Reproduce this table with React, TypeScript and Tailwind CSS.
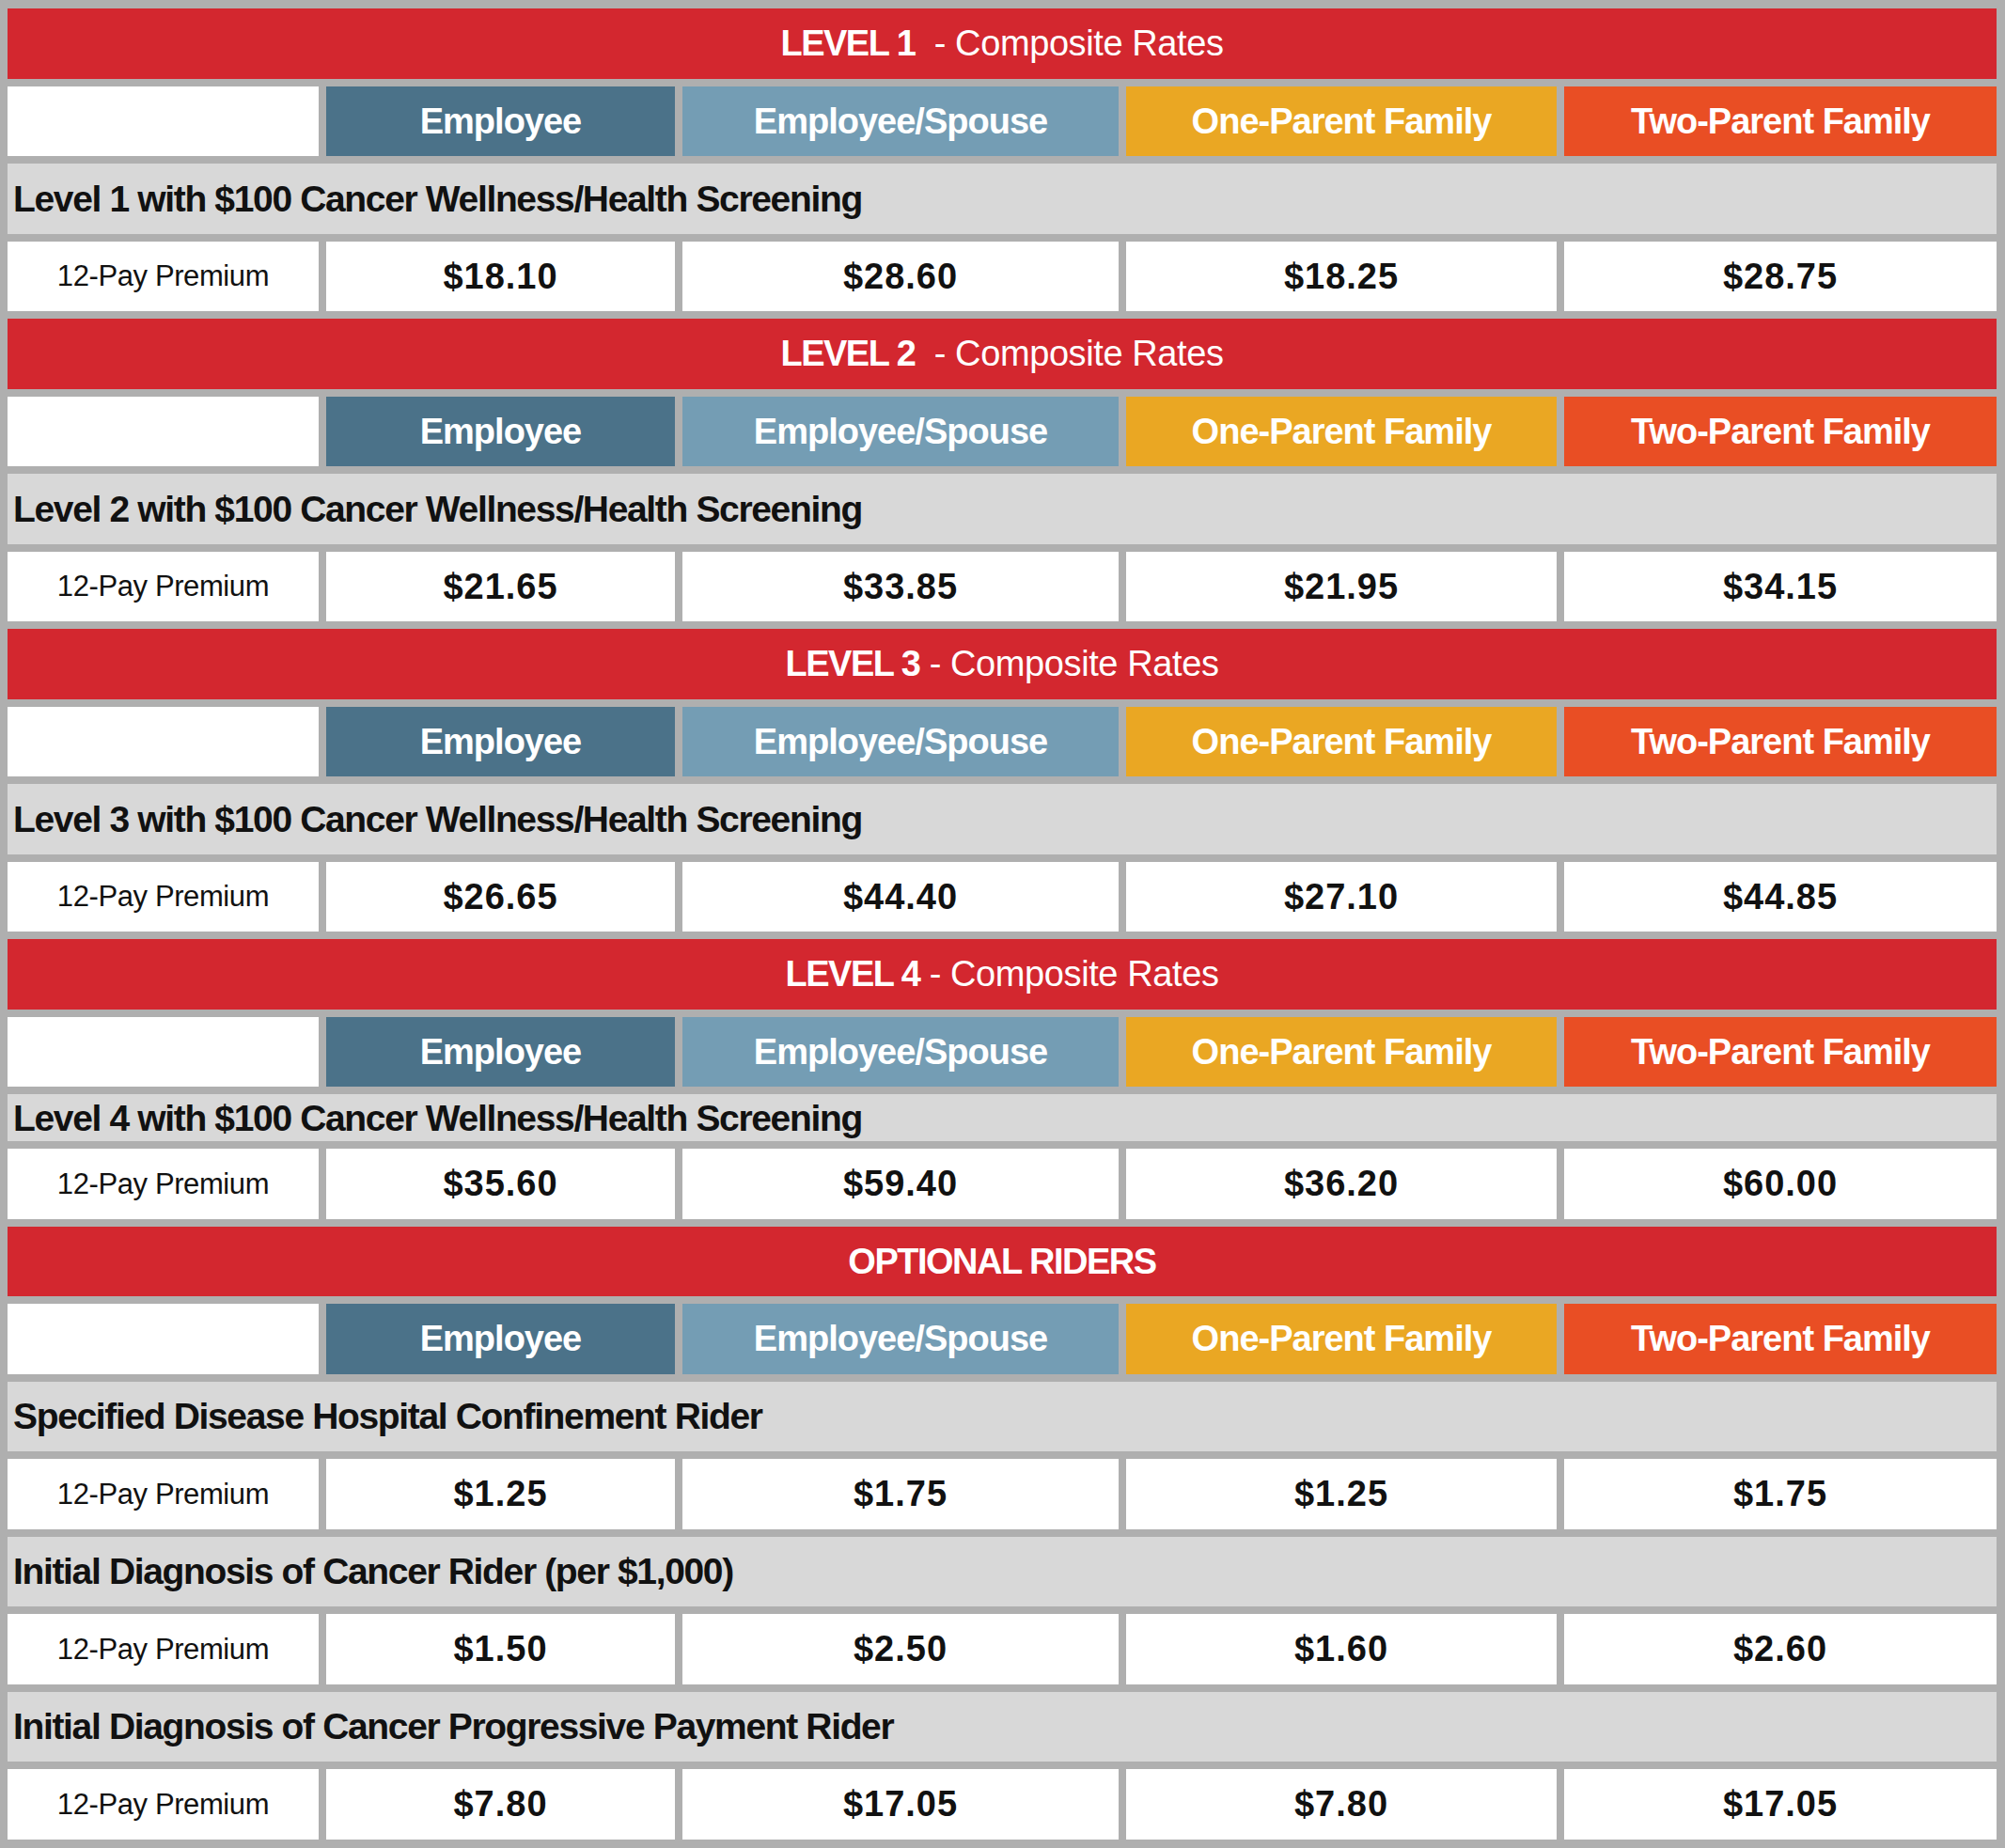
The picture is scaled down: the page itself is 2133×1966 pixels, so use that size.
import React from 'react';

const COLS = 'grid h-[74.5px] grid-cols-[331px_371px_464px_458px_1fr] gap-2';

const headers = [
  { label: 'Employee', bg: 'bg-[#4b7289]' },
  { label: 'Employee/Spouse', bg: 'bg-[#749db4]' },
  { label: 'One-Parent Family', bg: 'bg-[#eaa723]' },
  { label: 'Two-Parent Family', bg: 'bg-[#e94e24]' },
];

type Block = { name: string; values: string[]; short?: boolean };

const levels: { title: string; sep: string; blocks: Block[] }[] = [
  {
    title: 'LEVEL 1',
    sep: '  - Composite Rates',
    blocks: [
      {
        name: 'Level 1 with $100 Cancer Wellness/Health Screening',
        values: ['$18.10', '$28.60', '$18.25', '$28.75'],
      },
    ],
  },
  {
    title: 'LEVEL 2',
    sep: '  - Composite Rates',
    blocks: [
      {
        name: 'Level 2 with $100 Cancer Wellness/Health Screening',
        values: ['$21.65', '$33.85', '$21.95', '$34.15'],
      },
    ],
  },
  {
    title: 'LEVEL 3',
    sep: ' - Composite Rates',
    blocks: [
      {
        name: 'Level 3 with $100 Cancer Wellness/Health Screening',
        values: ['$26.65', '$44.40', '$27.10', '$44.85'],
      },
    ],
  },
  {
    title: 'LEVEL 4',
    sep: ' - Composite Rates',
    blocks: [
      {
        name: 'Level 4 with $100 Cancer Wellness/Health Screening',
        values: ['$35.60', '$59.40', '$36.20', '$60.00'],
        short: true,
      },
    ],
  },
  {
    title: 'OPTIONAL RIDERS',
    sep: '',
    blocks: [
      {
        name: 'Specified Disease Hospital Confinement Rider',
        values: ['$1.25', '$1.75', '$1.25', '$1.75'],
      },
      {
        name: 'Initial Diagnosis of Cancer Rider (per $1,000)',
        values: ['$1.50', '$2.50', '$1.60', '$2.60'],
      },
      {
        name: 'Initial Diagnosis of Cancer Progressive Payment Rider',
        values: ['$7.80', '$17.05', '$7.80', '$17.05'],
      },
    ],
  },
];

function TitleBar({ title, sep }: { title: string; sep: string }) {
  return (
    <div className="flex h-[74.5px] items-center justify-center bg-[#d3272f] text-[38px] leading-none text-white">
      <span className="font-bold tracking-[-1.5px]">{title}</span>
      {sep && <span className="whitespace-pre tracking-[-0.4px]">{sep}</span>}
    </div>
  );
}

function HeaderRow() {
  return (
    <div className={COLS}>
      <div className="bg-white" />
      {headers.map((h) => (
        <div
          key={h.label}
          className={`flex items-center justify-center ${h.bg} text-[38px] font-bold leading-none tracking-[-1px] text-white`}
        >
          {h.label}
        </div>
      ))}
    </div>
  );
}

export default function App() {
  return (
    <div className="flex h-[1966px] w-[2133px] flex-col gap-2 bg-[#afafaf] pl-2 pr-[9px] pt-[9px] font-['Liberation_Sans',Arial,sans-serif] text-[#111]">
      {levels.map((lvl) => (
        <React.Fragment key={lvl.title}>
          <TitleBar title={lvl.title} sep={lvl.sep} />
          <HeaderRow />
          {lvl.blocks.map((b) => (
            <React.Fragment key={b.name}>
              {/* section band */}
              <div
                className={`flex items-center bg-[#d8d8d8] pl-[6px] text-[39px] font-bold leading-none tracking-[-1.35px] ${
                  b.short ? 'h-[50px]' : 'h-[74.5px]'
                }`}
              >
                {b.name}
              </div>
              <div className={COLS}>
                <div className="flex items-center justify-center bg-white text-[31px] leading-none tracking-[-0.4px]">
                  12-Pay Premium
                </div>
                {b.values.map((v, i) => (
                  <div
                    key={i}
                    className="flex items-center justify-center bg-white text-[38px] font-bold leading-none tracking-[1px]"
                  >
                    {v}
                  </div>
                ))}
              </div>
            </React.Fragment>
          ))}
        </React.Fragment>
      ))}
    </div>
  );
}
